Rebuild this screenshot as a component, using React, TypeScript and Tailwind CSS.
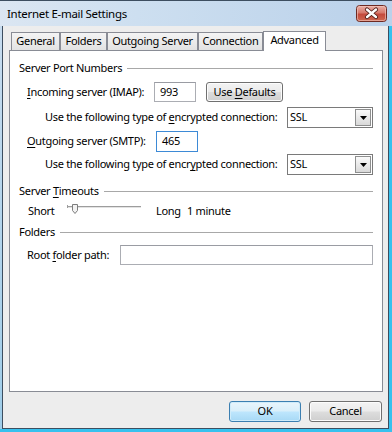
import React from "react";

const U = ({ children }: { children: React.ReactNode }) => (
  <span className="underline underline-offset-[2px] decoration-[1px]">{children}</span>
);

const Tab = ({ label, w, active }: { label: string; w: string; active?: boolean }) =>
  active ? (
    <div
      className={`${w} h-[20px] -mb-px relative z-10 bg-white border border-b-0 border-[#898c95] flex items-center justify-center pb-[3px]`}
    >
      <span>{label}</span>
    </div>
  ) : (
    <div
      className={`${w} h-[18px] border border-b-0 border-[#898c95] bg-[linear-gradient(#f4f4f4,#e2e2e2)] flex items-center justify-center`}
    >
      <span>{label}</span>
    </div>
  );

const GroupHeader = ({ children, mt }: { children: React.ReactNode; mt: string }) => (
  <div className={`${mt} flex items-center h-[14px] pl-[9px] pr-[9px] gap-[5px]`}>
    <span className="whitespace-nowrap">{children}</span>
    <div className="flex-1 h-px bg-[#a8a8a8]" />
  </div>
);

const Combo = () => (
  <div className="w-[86px] h-[21px] border border-[#7a7a7a] bg-white flex items-center">
    <span className="pl-[2px] flex-1">SSL</span>
    <div className="w-[16px] h-[17px] mr-px border border-[#8e8f8f] bg-[linear-gradient(#fafafa,#d9d9d9)] flex items-center justify-center">
      <svg width="7" height="4" viewBox="0 0 7 4">
        <path d="M0 0h7L3.5 4z" fill="#000" />
      </svg>
    </div>
  </div>
);

const GrayButton = ({ children, w, h }: { children: React.ReactNode; w: string; h: string }) => (
  <div
    className={`${w} ${h} rounded-[3px] border border-[#707070] bg-[linear-gradient(#f3f3f3_0%,#ebebeb_48%,#dddddd_52%,#cfcfcf_100%)] shadow-[inset_0_0_0_1px_#fcfcfc] flex items-center justify-center`}
  >
    <span className="whitespace-nowrap">{children}</span>
  </div>
);

export default function App() {
  return (
    <div className="w-[392px] h-[432px] overflow-hidden flex flex-col font-['Noto_Sans',sans-serif] text-[11px] tracking-[-0.3px] text-black bg-[#b5d2ec]">
      {/* Title bar */}
      <div className="h-[26px] shrink-0 flex border-t border-[#3d4e60] bg-[linear-gradient(90deg,#dbe6f2_0%,#cddff0_35%,#bad1ea_100%)]">
        <div className="flex-1 pl-[7px] pt-[5px] leading-[16px] text-[11.5px]">Internet E-mail Settings</div>
        <div className="mt-[4px] mr-[5px]">
          <svg width="31" height="17" viewBox="0 0 31 17">
            <defs>
              <linearGradient id="cg" x1="0" y1="0" x2="0" y2="1">
                <stop offset="0" stopColor="#eab2a8" />
                <stop offset="0.45" stopColor="#d7796c" />
                <stop offset="0.55" stopColor="#c44a3c" />
                <stop offset="1" stopColor="#cf6a52" />
              </linearGradient>
            </defs>
            <rect x="0.5" y="0.5" width="30" height="16" rx="3" fill="url(#cg)" stroke="#6e2a22" />
            <rect x="1.5" y="1.5" width="28" height="14" rx="2" fill="none" stroke="#f3c9c1" strokeOpacity="0.6" />
            <path d="M11 4.5l9 7.5M20 4.5l-9 7.5" stroke="#4b1a14" strokeWidth="4.2" strokeLinecap="round" />
            <path d="M11 4.5l9 7.5M20 4.5l-9 7.5" stroke="#ffffff" strokeWidth="2.4" strokeLinecap="round" />
          </svg>
        </div>
      </div>

      {/* Middle */}
      <div className="flex-1 flex min-h-0">
        <div className="w-[2px] bg-[linear-gradient(#c7dcef,#9fcde9)]" />
        <div className="flex-1 flex flex-col border-l border-r border-b border-[#3d4e60] bg-[#ededed]">
          {/* Tabs */}
          <div className="pt-[5px] ml-[6px] w-[374px]">
            <div className="flex items-end h-[19px] pl-[2px]">
              <Tab label="General" w="w-[49px]" />
              <Tab label="Folders" w="w-[47px]" />
              <Tab label="Outgoing Server" w="w-[91px]" />
              <Tab label="Connection" w="w-[65px]" />
              <Tab label="Advanced" w="w-[63px]" active />
            </div>
            {/* Panel */}
            <div className="h-[342px] bg-white border border-[#898c95] flex flex-col">
              <GroupHeader mt="mt-[10px]">Server Port Numbers</GroupHeader>

              <div className="mt-[7px] h-[20px] flex items-center pl-[17px]">
                <span className="w-[127px] whitespace-nowrap">
                  <U>I</U>ncoming server (IMAP):
                </span>
                <div className="w-[42px] h-[20px] border border-[#abadb3] border-t-[#9a9ca3] bg-white pl-[5px] flex items-center">
                  <span>993</span>
                </div>
                <div className="ml-[10px]">
                  <GrayButton w="w-[77px]" h="h-[20px]">
                    Use <U>D</U>efaults
                  </GrayButton>
                </div>
              </div>

              <div className="mt-[5px] h-[21px] flex items-center pl-[35px]">
                <span className="w-[242px] whitespace-nowrap">
                  Use the following type of <U>e</U>ncrypted connection:
                </span>
                <Combo />
              </div>

              <div className="mt-[3px] h-[21px] flex items-center pl-[17px]">
                <span className="w-[129px] whitespace-nowrap">
                  <U>O</U>utgoing server (SMTP):
                </span>
                <div className="w-[42px] h-[21px] border border-[#3d8ad6] bg-white pl-[5px] flex items-center">
                  <span>465</span>
                </div>
              </div>

              <div className="mt-[2px] h-[21px] flex items-center pl-[35px]">
                <span className="w-[242px] whitespace-nowrap">
                  Use the following type of encr<U>y</U>pted connection:
                </span>
                <Combo />
              </div>

              <GroupHeader mt="mt-[9px]">
                Server <U>T</U>imeouts
              </GroupHeader>

              <div className="mt-[6px] h-[14px] flex items-center pl-[18px]">
                <span className="w-[39px]">Short</span>
                <svg width="76" height="12" viewBox="0 0 76 12" className="self-start">
                  <rect x="0" y="2" width="74" height="1" fill="#9d9d9d" />
                  <rect x="0" y="3" width="74" height="1" fill="#e3e3e3" />
                  <rect x="0" y="1" width="1" height="3" fill="#9d9d9d" />
                  <path d="M5.5 0.5h5v6l-2.5 3l-2.5-3z" fill="#f2f2f2" stroke="#7d7d7d" />
                </svg>
                <span className="ml-[13px] w-[31px]">Long</span>
                <span>1 minute</span>
              </div>

              <GroupHeader mt="mt-[7px]">Folders</GroupHeader>

              <div className="mt-[6px] h-[20px] flex items-center pl-[17px] pr-[9px]">
                <span className="w-[93px] whitespace-nowrap">
                  Root <U>f</U>older path:
                </span>
                <div className="flex-1 h-[20px] border border-[#abadb3] border-t-[#9a9ca3] bg-white" />
              </div>
            </div>
          </div>

          {/* Buttons */}
          <div className="mt-[9px] flex justify-end pr-[6px] gap-[8px]">
            <div className="w-[72px] h-[21px] rounded-[3px] border border-[#3c7fb1] bg-[linear-gradient(#e9f5fc_0%,#d9effa_48%,#bee6fd_52%,#a7d9f5_100%)] shadow-[inset_0_0_0_1px_#d0ecfa] flex items-center justify-center">
              <span>OK</span>
            </div>
            <GrayButton w="w-[73px]" h="h-[21px]">
              Cancel
            </GrayButton>
          </div>
        </div>
        <div className="w-[3px] bg-[#38c1ee]" />
      </div>
      <div className="h-[3px] shrink-0 bg-[#38c1ee]" />
    </div>
  );
}
